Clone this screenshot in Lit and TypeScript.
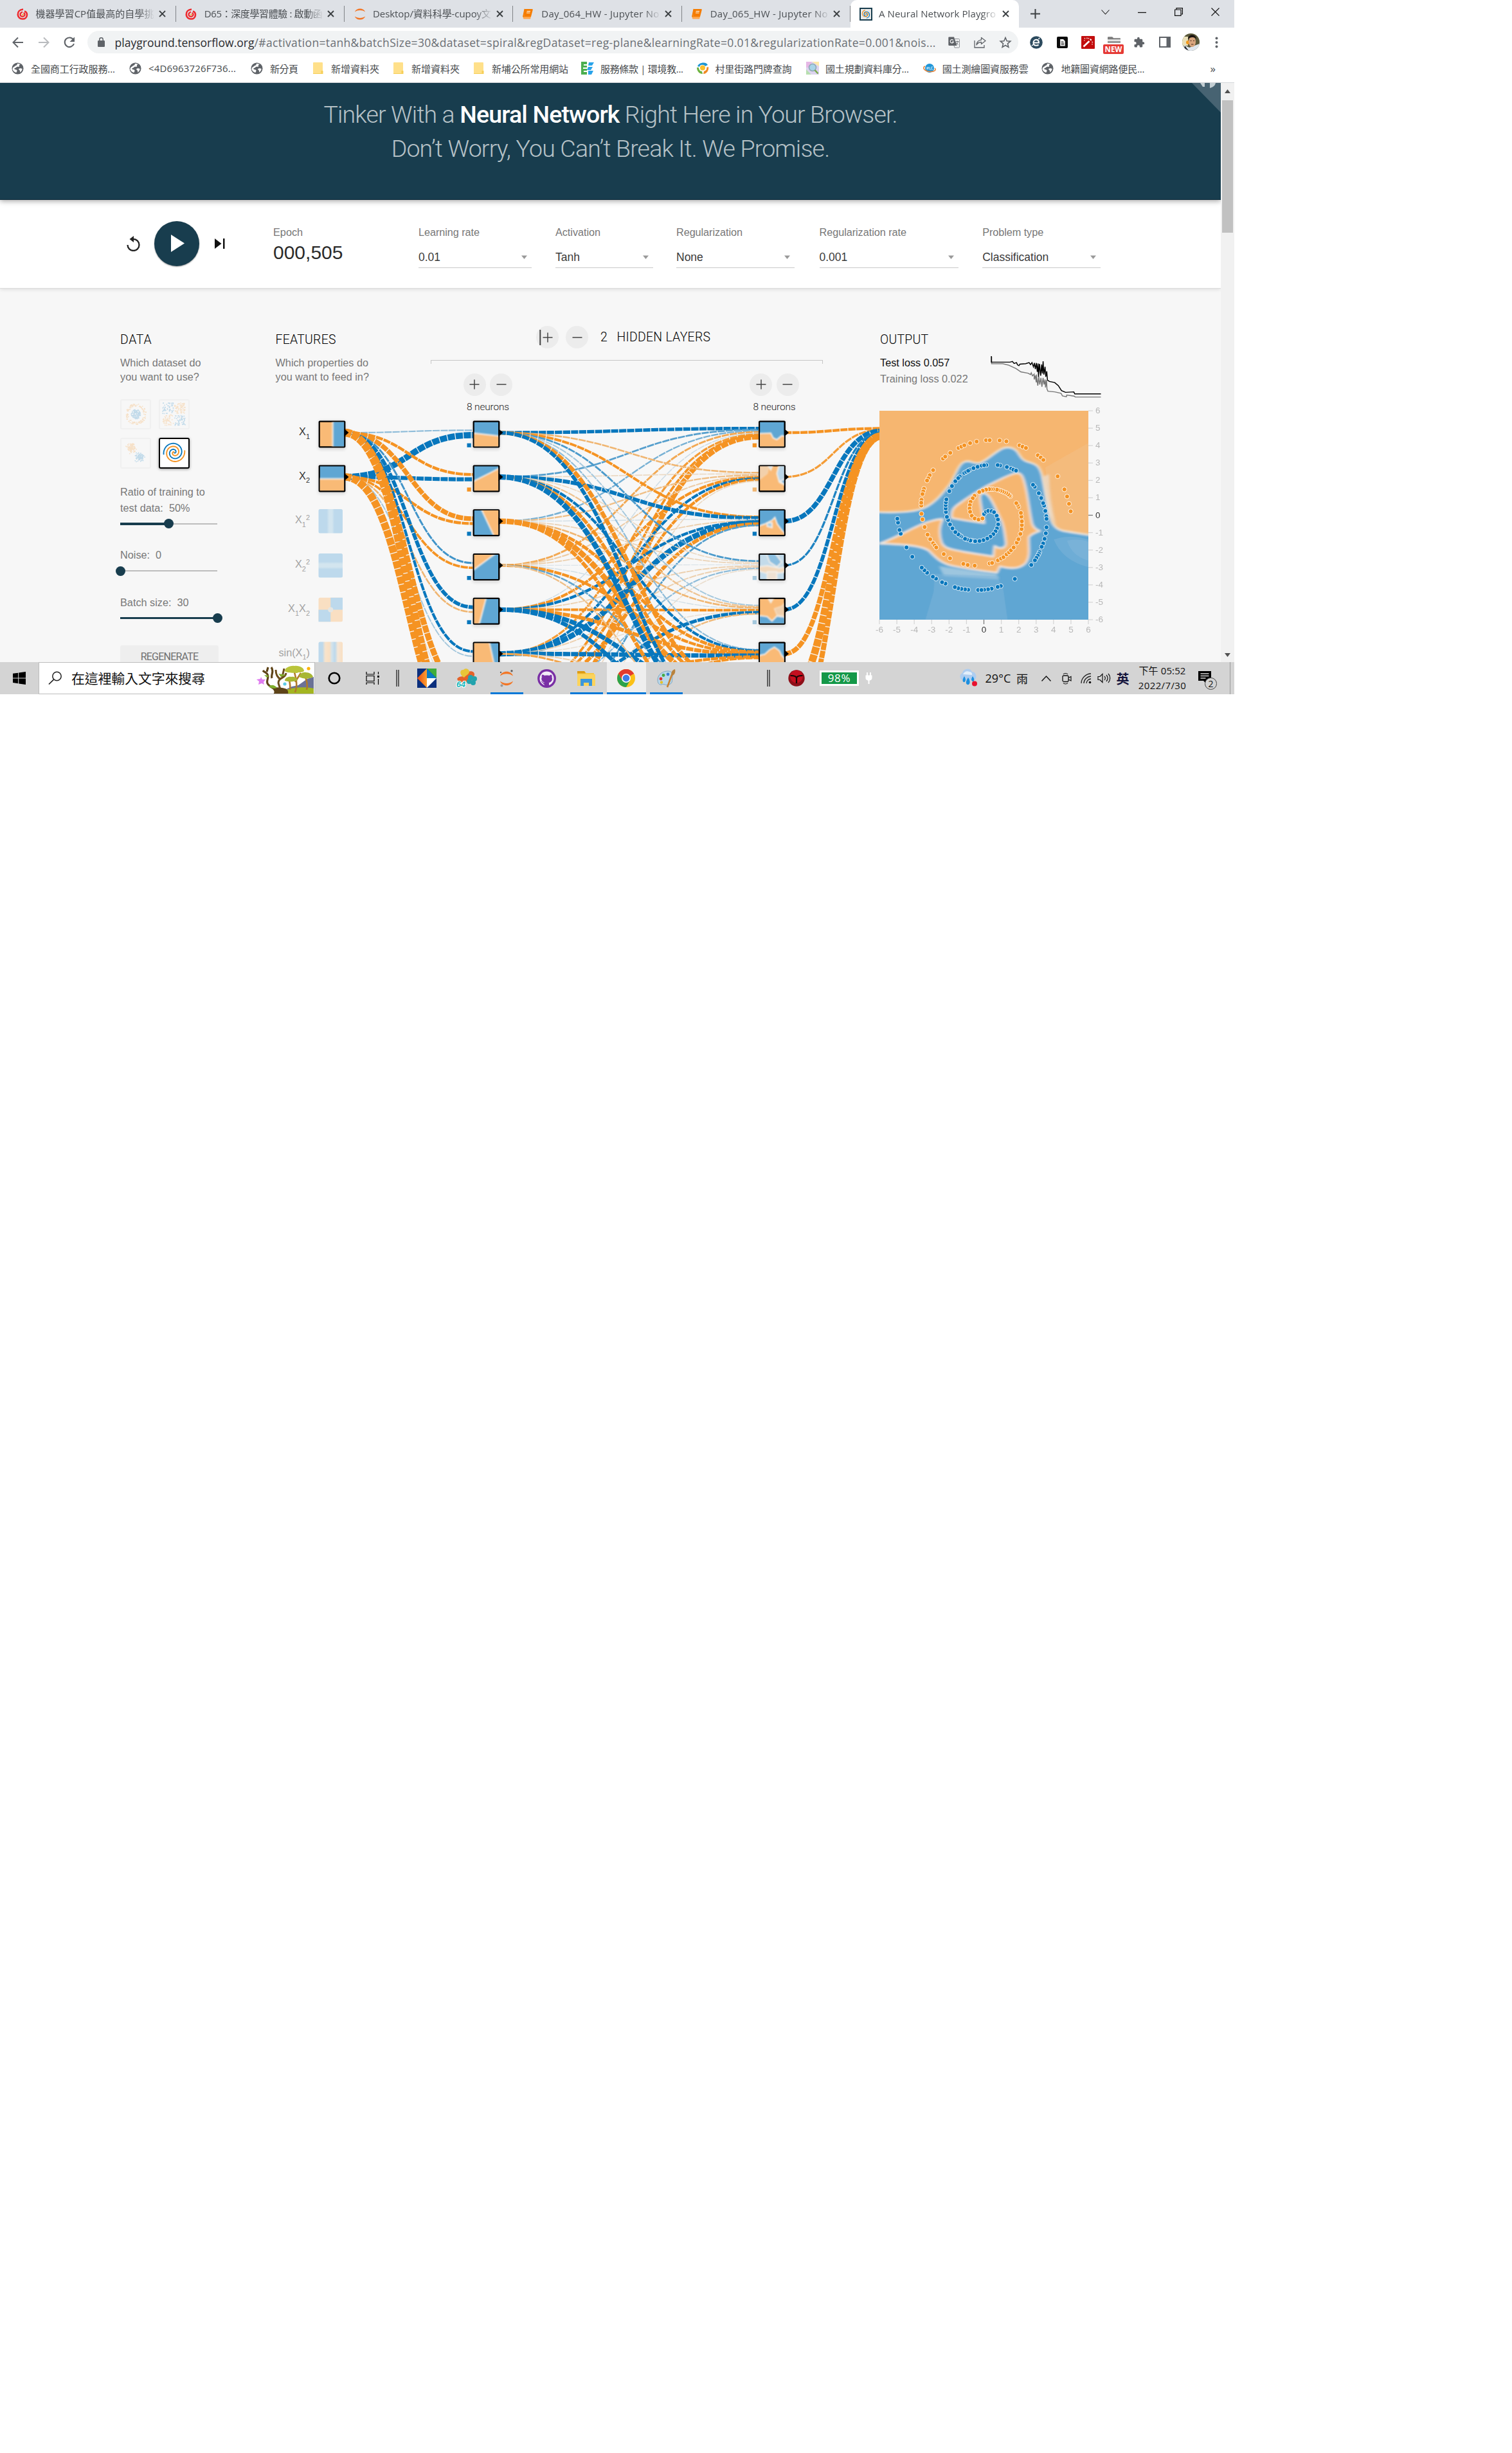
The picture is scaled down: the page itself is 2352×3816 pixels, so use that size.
import { LitElement, html, svg, css } from "lit";
import { customElement, property } from "lit/decorators.js";

const BLUE = "#0877bd";
const ORANGE = "#f59322";
const HEAT_BLUE = "#5fa6d3";
const HEAT_ORANGE = "#f6b670";
const INK = "#5f6368";

/** Inline text whose tracking is adjusted so that it spans `w` pixels. */
@customElement("fit-text")
class FitText extends LitElement {
  @property({ type: Number }) w = 0;
  static styles = css`
    :host { display: inline-block; white-space: nowrap; }
  `;
  render() {
    return html`<span class="t"><slot></slot></span>`;
  }
  firstUpdated() {
    const el = this.renderRoot.querySelector(".t") as HTMLElement;
    const n = (this.textContent || "").length;
    if (!this.w || n < 2) return;
    const ls = (this.w - el.getBoundingClientRect().width) / (n - 1);
    el.style.letterSpacing = ls.toFixed(3) + "px";
  }
}

/* ---------- icons ---------- */
const box = (w: number, h: number, vb: string, body: unknown) =>
  html`<svg class="ic" width=${w} height=${h} viewBox=${vb} preserveAspectRatio="none">${body}</svg>`;

const icons: Record<string, () => unknown> = {
  cupoy: () => box(18, 18, "0 0 18 18", svg`
    <path d="M10 1.500C4.500 2 1.500 5.500 1.800 10c.4 4 3.400 6.500 7.200 6.500 4 0 7-2.700 7-6.500 0-2.500-1.500-4.700-4-5.500" fill="none" stroke="#ee2a2e" stroke-width="2.600"/>
    <path d="M9 5.500c-2.500 1-4 3-3.200 5.300.7 2 4 2.800 5.800 1 1.600-1.700 1-4.200-1-4.800" fill="none" stroke="#ee2a2e" stroke-width="2.300"/><circle cx="9.500" cy="9.800" r="1.200" fill="#f7a823"/>`),
  jupyter: () => box(20, 20, "0 0 20 20", svg`
    <path d="M2 6.500C4-.3 16-.3 18 6.500 14 3.200 6 3.200 2 6.500zM2 13.500c2 6.800 14 6.800 16 0-4 3.300-12 3.300-16 0z" fill="#f37726"/>`),
  book: () => box(18, 18, "0 0 18 18", svg`
    <path d="M5 1h10.500c1 0 1.500.6 1.200 1.500L14 13H3z" fill="#f57c00"/><path d="M3 13h11l-1 3.500H3.500C1.500 16.500 1 14 3 13z" fill="#ffa64d"/><path d="M4.500 1L2 13.500" stroke="#f57c00" stroke-width="2"/><path d="M7.500 4.500h5.500M7 7h5.500" stroke="#fff" stroke-width="1.100"/>`),
  spiral: () => box(20, 20, "0 0 20 20", svg`
    <rect width="20" height="20" fill="#183d4e"/><rect x="2" y="2" width="16" height="16" fill="#e8eaeb"/>
    <path d="M10 10c1-1.500 3 0 2.300 1.800-1 2.500-5.300 1.600-5.300-1.600 0-4 5-5.200 7.500-2.400 2.500 3 .8 7.700-3.500 8.400" fill="none" stroke="#0877bd" stroke-width="1.200"/>
    <path d="M10 10c-1 1.200-2.600-.3-1.800-1.800 1.300-2.200 5-1 5 1.800 0 4-5.200 5.500-8 2C3 9 5 4.300 9 3.600" fill="none" stroke="#f59322" stroke-width="1.200"/>`),
  globe: () => box(19, 19, "0 0 20 20", svg`
    <circle cx="10" cy="10" r="9.500" fill="${INK}"/>
    <path d="M3 7.500c2 .3 2.500-2 4.500-2.500 1.500-.3 2-1.500 1.500-2.700 2-.4 4 0 5.500 1-2 .3-2.300 1.200-1.800 2.400.6 1.800-1.700 1.500-3.200 1.500-2 0-1.500 2-3.500 2-1 0-2 1-1 2 1.500.8 4 .2 4 2.500 0 1.500-1 1.700-1 3-3-.5-6-3-6.500-6zM12 10.500c1.500-1 3.500-1 5.500 0-.3 3-2 5-3.800 6 .3-2 .3-3-.7-3.700-.9-.7-1.500-1.300-1-2.300z" fill="#fff"/>`),
  folder: () => box(16, 18, "0 0 16 18", svg`
    <rect x="0" y="0" width="15" height="18" rx="1" fill="#ffe08a"/><path d="M12.500 13h3v5h-3z" fill="#f6cf57"/><path d="M0 17h15v1H0z" fill="#f6cf57"/>`),
  ez: () => box(20, 20, "0 0 20 20", svg`
    <path d="M0 0h9v20H0z" fill="#4caf50"/><path d="M4 5h5M3 10h6M4 15h5" stroke="#fff" stroke-width="2"/><path d="M12 1h8l-3 5h-6zM11 8h7l-3 5H9zM11 14h8l-3 6h-5z" fill="#29a3ea"/>`),
  village: () => box(20, 20, "0 0 20 20", svg`
    <path d="M2 7C4 1 15-1 18 5l-4 2C12 4 6 4 5 8z" fill="#1b95d4"/><path d="M1 9c0 6 4 10 9 10l-1-4c-3 0-5-3-5-6z" fill="#6db33f"/><path d="M19 8c1 6-3 11-8 11l1-4c3-1 5-3 4-6z" fill="#f08a24"/><circle cx="10" cy="9.500" r="4" fill="#fbc02d"/>`),
  plan: () => box(20, 20, "0 0 20 20", svg`
    <rect width="20" height="20" fill="#dcd3ee"/><path d="M0 0h9L5 9H0z" fill="#e6b8e6"/><path d="M9 0h11v7z" fill="#ffe9a8"/><path d="M0 12l8 8H0z" fill="#b8dfb0"/><circle cx="10" cy="9" r="5.500" fill="#a8d4e8" stroke="#8fa8b4" stroke-width="1.500"/><path d="M13.500 13l5 5.500" stroke="#79a94c" stroke-width="2.500"/>`),
  nlsc: () => box(20, 16, "0 0 20 16", svg`
    <circle cx="10" cy="8" r="7" fill="#2196d8"/><path d="M3 5C-2 7 2 13 10 13.500c8 .3 11-3 8-5.500" fill="none" stroke="#e9853a" stroke-width="1.600"/><path d="M6 6v4l2-4v4M10 6v4h2M15 6h-2v4h2" fill="none" stroke="#d8effb" stroke-width=".9"/>`),
  back: () => box(18, 18, "0 0 18 18", svg`<path d="M17 9H2M9 1.500L1.500 9 9 16.500" fill="none" stroke="${INK}" stroke-width="2"/>`),
  fwd: () => box(18, 18, "0 0 18 18", svg`<path d="M1 9h15M9 1.500L16.500 9 9 16.500" fill="none" stroke="#b9bbbe" stroke-width="2"/>`),
  reload: () => box(18, 18, "0 0 18 18", svg`<path d="M15 4.500A7.300 7.300 0 1 0 16 11" fill="none" stroke="${INK}" stroke-width="2.100"/><path d="M17 .5V8H9.500z" fill="${INK}"/>`),
  lock: () => box(11, 15, "0 0 11 15", svg`<rect y="5" width="11" height="10" rx="1.200" fill="${INK}"/><path d="M2.800 6V3.500a2.700 2.700 0 0 1 5.400 0V6" fill="none" stroke="${INK}" stroke-width="1.500"/>`),
  translate: () => box(18, 18, "0 0 18 18", svg`
    <path d="M1.500.5H9L13.500 14H1.500C.8 14 .3 13.500.3 12.800V1.700C.3 1 .8.500 1.500.500z" fill="${INK}"/><path d="M9.500 3.500h7c.6 0 1 .4 1 1v11.600c0 .6-.4 1-1 1H10L9 14" fill="none" stroke="#8d9094" stroke-width="1"/><path d="M8 5.800A2.600 2.600 0 1 0 8.300 8H6" fill="none" stroke="#fff" stroke-width="1.100"/><path d="M11.500 7.500h5M14 6.500v1M15.500 7.500c-.5 2.500-2 4-3 4.500M12.500 9c.5 1.500 2 3 3 3.500" fill="none" stroke="${INK}" stroke-width=".9"/>`),
  share: () => box(19, 18, "0 0 19 18", svg`<path d="M1 6v11h15v-4" fill="none" stroke="${INK}" stroke-width="1.300"/><path d="M11.500 1.500L18 6.500l-6.500 5V8.500c-3.500 0-6 1.500-7.500 4.500.3-4.500 3-7.500 7.500-8z" fill="none" stroke="${INK}" stroke-width="1.300" stroke-linejoin="round"/>`),
  star: () => box(18, 18, "0 0 18 18", svg`<path d="M9 1.500l2.200 5.200 5.600.5-4.300 3.700 1.300 5.500L9 13.500l-4.800 2.900 1.300-5.500L1.200 7.200l5.600-.5z" fill="none" stroke="${INK}" stroke-width="1.600"/>`),
  eext: () => box(20, 20, "0 0 20 20", svg`<circle cx="10" cy="10" r="9.800" fill="#2c4a5e"/><path d="M5.500 10.500h8.500c0-3-1.800-4.700-4.200-4.700S5.500 7.800 5.500 10.500s2 4.300 4.500 4.300c1.500 0 2.700-.4 3.600-1.300" fill="none" stroke="#fff" stroke-width="2"/><path d="M15 3l-1.500 2M3 15l2-1.500" stroke="#fff" stroke-width="1.500"/>`),
  doc: () => box(17, 18, "0 0 18 18", svg`<rect width="18" height="18" rx="2" fill="#0b0b0b"/><path d="M5.500 4h5l3 3v7.500h-8z" fill="#fff"/><path d="M7 8h4M7 10.200h5M7 12.300h5" stroke="#0b0b0b" stroke-width="1"/>`),
  wand: () => box(21, 20, "0 0 21 20", svg`<rect width="21" height="20" rx="1" fill="#c20d0d"/><path d="M3.500 16.500l9-8.500M14 6.500l1.500-1.500" stroke="#fff" stroke-width="2.600"/><path d="M5 3l1 1.500M9 2.500v2M4 7h1.500M16.500 9l1.500 1M12 3l-1 1.500M17 12v1.500" stroke="#fff" stroke-width="1.200"/>`),
  newf: () => html`<span class="newf">${box(21, 11, "0 0 21 11", svg`<path d="M1 1.500C1 .7 1.500.3 2.200.3h6l2 2h9.600c.7 0 1.200.4 1.200 1.200V4.500H1z" fill="#7c7c7c"/><path d="M1 6.500h20V10H1z" fill="#9a9a9a"/>`)}<b class="badge">NEW</b></span>`,
  puzzle: () => box(18, 18, "0 0 24 24", svg`<path d="M20.500 11H19V7c0-1.100-.9-2-2-2h-4V3.500a2.500 2.500 0 0 0-5 0V5H4c-1.100 0-2 .9-2 2v3.800h1.500a2.700 2.700 0 0 1 0 5.400H2V20c0 1.100.9 2 2 2h3.800v-1.500a2.700 2.700 0 0 1 5.400 0V22H17c1.100 0 2-.9 2-2v-4h1.500a2.500 2.500 0 0 0 0-5z" fill="${INK}"/>`),
  panel: () => box(18, 17, "0 0 18 17", svg`<rect x="1" y="1" width="16" height="15" fill="#fff" stroke="${INK}" stroke-width="2"/><path d="M11.500 1H17v15h-5.500z" fill="${INK}"/>`),
  avatar: () => box(27, 27, "0 0 27 27", svg`<defs><clipPath id="av"><circle cx="13.500" cy="13.500" r="13.500"/></clipPath></defs><g clip-path="url(#av)"><rect width="27" height="27" fill="#5b5a3c"/><path d="M0 5h9v14H0z" fill="#e9dfb8"/><circle cx="9" cy="14" r="3" fill="#f29a1f"/><path d="M0 27l3-9 8 4 8-3 8-3v11z" fill="#dfe6ee"/><ellipse cx="15.500" cy="13" rx="5.500" ry="8" fill="#d9a57e"/><path d="M9 9c0-9 13-9 13 0-2-4-10-4-13 0z" fill="#1c1511"/><path d="M12.500 11.500h2M17 11.500h2M14 17h3.500" stroke="#4a2c1e" stroke-width="1"/><path d="M4 19l6 8H2z" fill="#20242c"/></g>`),
  dots: () => box(5, 18, "0 0 5 18", svg`<circle cx="2.500" cy="2.500" r="2" fill="${INK}"/><circle cx="2.500" cy="9" r="2" fill="${INK}"/><circle cx="2.500" cy="15.500" r="2" fill="${INK}"/>`),
  chev: () => box(13, 8, "0 0 13 8", svg`<path d="M.5.5l6 6.500 6-6.500" fill="none" stroke="#222" stroke-width="1.100"/>`),
  min: () => box(13, 8, "0 0 13 8", svg`<path d="M0 4.500h13" stroke="#111" stroke-width="1.300"/>`),
  restore: () => box(13, 13, "0 0 13 13", svg`<path d="M.6 3h9.400v9.400H.6zM3 3V.6h9.400V10H10" fill="none" stroke="#111" stroke-width="1.200"/>`),
  close: () => box(13, 13, "0 0 13 13", svg`<path d="M.5.5l12 12M12.500.5l-12 12" stroke="#111" stroke-width="1.100"/>`),
  x: () => box(11, 11, "0 0 11 11", svg`<path d="M1 1l9 9M10 1l-9 9" stroke="#3c4043" stroke-width="1.900"/>`),
  plus: () => box(15, 15, "0 0 15 15", svg`<path d="M7.500 0v15M0 7.500h15" stroke="#3c4043" stroke-width="2"/>`),
  /* taskbar */
  win: () => box(20, 20, "0 0 20 20", svg`<path d="M0 2.800l8.200-1.100v7.700H0zM9.200 1.500L20 0v9.400H9.200zM0 10.400h8.200v7.800L0 17.100zM9.200 10.400H20V20L9.200 18.400z" fill="#000"/>`),
  search: () => box(22, 22, "0 0 22 22", svg`<circle cx="13.500" cy="8" r="6.700" fill="none" stroke="#222" stroke-width="1.500"/><path d="M8.800 12.800L1 20.500" stroke="#222" stroke-width="1.700"/>`),
  tree: () => box(96, 49, "0 0 96 49", svg`
    <path d="M46 44l15-7 10-2 14-10 10-3v26H40z" fill="#6b7196"/><path d="M50 43c12-5 34-6 45-3v9H48z" fill="#a3b521"/>
    <path d="M66 46c4-10 2-20-1-31M66 30l9-14M84 42c2-8 0-14-2-20M58 42c1-6 0-10-1-15" fill="none" stroke="#b07a2a" stroke-width="2.600"/>
    <path d="M50 13c0-5 8-9 15-8 8-1 15 3 15 8-4 3-8 1-11 3-5-1-14 1-19-3z" fill="#b9c43a"/><path d="M50 28c0-5 6-7 10-6 5-1 9 2 10 5-6 3-14 3-20 1zM72 22c1-5 6-8 11-7 5 0 10 3 11 7-6 4-16 3-22 0z" fill="#a8b733"/>
    <path d="M42 49c2-9-16-9-19-17-2-5 3-9 0-14-1-3-5-3-7-6M22 14l2-7M30 24c-2-6 4-10-1-17" fill="none" stroke="#5d4318" stroke-width="3.200"/>
    <path d="M42 49c4-13-6-15 0-23 4-4 9-3 10-10M44 26c-6-3-8-8-8-15M46 22l3-13" fill="none" stroke="#6a4d1c" stroke-width="3"/>
    <path d="M32 49c4-5 0-8-6-11 8 0 14 0 20 1 8 1 10 4 9 10z" fill="#5d4318"/>
    <path d="M25 37c4-4 10-2 13 2-5 2-9 1-13-2zM40 17l12 2-8 3zM18 19l8 1-4 3z" fill="#7fae2c"/>
    <path d="M13 22l2 4 5 0-3 4 1 4-4-2-5 2 1-5-4-3 6-1z" fill="#df7df0"/><circle cx="87" cy="9" r="2.600" fill="#ffb300"/><circle cx="50" cy="33" r="2.600" fill="#5ecbe8"/>`),
  cortana: () => box(20, 20, "0 0 20 20", svg`<circle cx="10" cy="10" r="8.300" fill="none" stroke="#000" stroke-width="2.600"/>`),
  taskview: () => box(22, 20, "0 0 22 20", svg`<path d="M1 0v4h12V0M1 6.500h12v8H1zM1 20v-3h12v3M19.500 0v4M19.500 11v9" fill="none" stroke="#000" stroke-width="1.200"/><path d="M18 6h3v3h-3z"/>`),
  sep: () => box(5, 26, "0 0 5 26", svg`<path d="M1 0v26M4 0v26" stroke="#111" stroke-width="1.200"/>`),
  diamond: () => box(30, 30, "0 0 30 30", svg`<defs><linearGradient id="dg"><stop offset="0" stop-color="#e84a10"/><stop offset="1" stop-color="#ffa030"/></linearGradient></defs><rect width="30" height="30" fill="#0b2f7d"/><path d="M15 0h15v15z" fill="#3fae3c"/><path d="M15 0L0 15l15 15z" fill="url(#dg)"/><path d="M15 0l15 15H15z" fill="#0a7ac2"/><path d="M15 15h15L15 30z" fill="#fff"/>`),
  flower: () => box(32, 30, "0 0 32 30", svg`<path d="M1 16c4-6 12-2 14-7 3-7 14-6 13 1s-4 9-10 10-14 4-17-4z" fill="#e4632a"/><path d="M12 14C4 10 5 1 11 2c2-3 9-2 9 3 0 4-5 5-8 9z" fill="#e8c637"/><g fill="#22a3ad"><circle cx="22" cy="14" r="4"/><circle cx="28" cy="16" r="4"/><circle cx="26" cy="22" r="4"/><circle cx="20" cy="20" r="4"/></g><text x="0" y="28.500" font-family="Liberation Sans, sans-serif" font-weight="700" font-style="italic" font-size="12.500" fill="#12b5b9" stroke="#fff" stroke-width="2" paint-order="stroke">64</text>`),
  jup2: () => box(22, 27, "0 0 22 27", svg`<path d="M1 9.500c2.500-9 17.500-9 20 0-5-4.500-15-4.500-20 0zM1 17.500c2.500 9 17.500 9 20 0-5 4.500-15 4.500-20 0z" fill="#f37726"/><circle cx="19" cy="1.800" r="1.700" fill="#616262"/><circle cx="2" cy="4" r="1.200" fill="#616262"/><circle cx="3.500" cy="24.500" r="2" fill="#989798"/>`),
  github: () => box(29, 29, "0 0 29 29", svg`<circle cx="14.500" cy="14.500" r="14.400" fill="#7a2fa5"/><circle cx="14.500" cy="14.500" r="11" fill="#f3ecf8"/><path d="M12 25.500v-4c-4 1-4-2-6-2.500M17.500 25.500v-5c5-.5 5.500-4.500 4.500-8 .3-1 .2-2.500-.3-3.500-1.500 0-2.500 1-3.200 1.400-2-.5-5.500-.5-7.500 0C10 9.500 8.500 9 7.500 9c-.5 1-.5 2.500-.2 3.500-1.300 3.500 0 7.500 4.700 8l-.5 5h6z" fill="#7a2fa5" stroke="#7a2fa5"/>`),
  files: () => box(28, 23, "0 0 28 23", svg`<path d="M0 0h11l3 3h12v20H0z" fill="#f8c846"/><path d="M0 0h11l2 3.500H0z" fill="#dd9a12"/><path d="M0 5h28v18H0z" fill="#fbd35c"/><path d="M5 12h18v11h-5v-5h-8v5H5z" fill="#3a96dd"/>`),
  chrome: () => box(28, 28, "0 0 28 28", svg`<circle cx="14" cy="14" r="14" fill="#fbc116"/><path d="M14 14L1.900 7A14 14 0 0 1 26.100 7z" fill="#e33b2e"/><path d="M14 7h12.100A14 14 0 0 0 1.900 7L8 17.500z" fill="#e33b2e"/><path d="M1.900 7A14 14 0 0 0 14 28l6-10.500L14 20 8 17.500z" fill="#2ba24c"/><circle cx="14" cy="14" r="7" fill="#fff"/><circle cx="14" cy="14" r="5.400" fill="#3f7de8"/>`),
  paint: () => box(29, 29, "0 0 29 29", svg`<path d="M1 17C1 8 9 3 17 3c6 0 8 4 7 9-1 6 1 9-5 12-6 2-8-2-12 0C3 25 1 21 1 17z" fill="#b9d7ea" stroke="#7fa6c0" stroke-width="1"/><circle cx="6" cy="15" r="2.400" fill="#d33"/><circle cx="10" cy="9.500" r="2.400" fill="#4a4"/><circle cx="17" cy="8" r="2.400" fill="#3a7fd0"/><circle cx="7" cy="20.500" r="2.200" fill="#e6c12a"/><path d="M16 28l7-19" stroke="#c9802e" stroke-width="2.600"/><path d="M22 9c0-5 2-8 6-9 1 4 0 8-4 10z" fill="#b9823c"/>`),
  trend: () => box(26, 26, "0 0 26 26", svg`<circle cx="13" cy="13" r="12.700" fill="#8d0f19"/><circle cx="13" cy="10.500" r="10" fill="#c4101f"/><path d="M3.500 9c4 0 9.500 1 9.500 4 0-3 5.500-4 9.500-4M13 12v9" fill="none" stroke="#1b0505" stroke-width="2.200"/>`),
  plug: () => box(11, 18, "0 0 11 18", svg`<path d="M3 0v5M8 0v5" stroke="#fff" stroke-width="1.800"/><path d="M.5 4.500h10V9c0 2-2 3.500-4 3.800V18h-2v-5.200C2.500 12.500.5 11 .5 9z" fill="#fff"/>`),
  rain: () => box(29, 26, "0 0 29 26", svg`<path d="M6 16a6 6 0 0 1 0-11 8 8 0 0 1 15-2 7 7 0 0 1 3 13z" fill="#aecdf0"/><path d="M7 7c2-4 6-6 10-4 3 0 5 3 4 5z" fill="#e3effb"/><path d="M9 10c-3 5-3 8-1 9s5-3 1-9zM15 12c-4 6-4 10-1 11s6-4 1-11zM22 10c-3 5-2 7 0 8s4-3 0-8z" fill="#1b8fe0"/><circle cx="25" cy="21.500" r="4" fill="#e8112d"/>`),
  up: () => box(15, 9, "0 0 15 9", svg`<path d="M.5 8.500l7-7.500 7 7.500" fill="none" stroke="#111" stroke-width="1.400"/>`),
  cam: () => box(15, 19, "0 0 15 19", svg`<rect x="1" y="5" width="9" height="9.500" rx="2" fill="none" stroke="#111" stroke-width="1.300"/><path d="M10 8.500l4-2v6.500l-4-2M2 3c1.500-2 5.500-2 7 0M2 16.500c1.500 2 5.500 2 7 0" fill="none" stroke="#111" stroke-width="1.200"/>`),
  wifi: () => box(17, 17, "0 0 17 17", svg`<path d="M1 16C1 8 8 1 16 1M5 16C5 10 10 5.500 16 5M9 16c0-3.500 3-6.500 7-7" fill="none" stroke="#222" stroke-width="1.300"/><circle cx="14.500" cy="14.500" r="1.800" fill="#111"/>`),
  vol: () => box(21, 16, "0 0 21 16", svg`<path d="M1 5.500h3l4-4v13l-4-4H1z" fill="none" stroke="#111" stroke-width="1.200"/><path d="M11 5c1.500 1.700 1.500 4.300 0 6M14 3c2.500 3 2.500 7 0 10M17 1c3.600 4 3.600 10 0 14" fill="none" stroke="#111" stroke-width="1.200"/>`),
  note: () => html`<span class="note">${box(20, 20, "0 0 20 20", svg`<path d="M0 0h20v15h-7v5l-5-5H0z"/><path d="M3.500 4h13M3.500 7.500h13M3.500 11h8" stroke="#d4d4d4" stroke-width="1.300"/>`)}<i class="count">2</i></span>`,
};

/* ---------- browser chrome data ---------- */
const TABS = [
  { icon: "cupoy", title: "機器學習CP值最高的自學挑", w: 184 },
  { icon: "cupoy", title: "D65：深度學習體驗 : 啟動函", w: 184 },
  { icon: "jupyter", title: "Desktop/資料科學-cupoy文", w: 184 },
  { icon: "book", title: "Day_064_HW - Jupyter No", w: 183 },
  { icon: "book", title: "Day_065_HW - Jupyter No", w: 183 },
  { icon: "spiral", title: "A Neural Network Playgro", w: 182, active: true },
];

const BOOKMARKS: [string, string, number, number][] = [
  ["globe", "全國商工行政服務...", 131, 183],
  ["globe", "<4D6963726F736...", 136, 189],
  ["globe", "新分頁", 44, 95],
  ["folder", "新增資料夾", 75, 125],
  ["folder", "新增資料夾", 75, 125],
  ["folder", "新埔公所常用網站", 119, 169],
  ["ez", "服務條款 | 環境教...", 129, 178.5],
  ["village", "村里街路門牌查詢", 119, 171.5],
  ["plan", "國土規劃資料庫分...", 130, 181.7],
  ["nlsc", "國土測繪圖資服務雲", 134, 184.8],
  ["globe", "地籍圖資網路便民...", 130, 262],
];

const CONTROLS: [string, string, number, number, number][] = [
  ["Learning rate", "0.01", 176, 213, 95],
  ["Activation", "Tanh", 151.5, 188, 70],
  ["Regularization", "None", 184, 222.5, 103],
  ["Regularization rate", "0.001", 216, 253.7, 135.5],
  ["Problem type", "Classification", 184, 184, 95],
];

/* ---------- network ---------- */
const ROWS = [0, 1, 2, 3, 4, 5, 6, 7].map((i) => 673.6 + i * 68.8);
const W1 = [
  [0.4, 3.7], [-1.4, 2.2], [-2.7, -1.4], [0.75, -1.1], [2, -0.6], [1.3, 0.3], [-3.4, -0.12], [-5, -4.6],
];
const W2 = [
  [1.8, 0.65, 0.5, -0.75, 0.12, -0.9, -1.1, -3],
  [-0.6, -0.2, -0.5, -0.35, -1.3, 1.3, -1.4, -0.2],
  [-1.2, 2.1, 0.1, -0.3, 1.4, 3.2, -2, 0.65],
  [0.7, -0.2, -0.25, 0.05, -0.3, -0.3, 0.4, -0.15],
  [0.3, -0.45, -0.6, 0.1, -1.2, -0.12, 1.8, -0.55],
  [0.4, 1.3, -1.6, -1.4, -2, 2.4, -1.5, -1],
  [-2.3, -1.8, -3.2, 0.6, 2.6, -0.3, 1.4, -1.2],
  [2, 3.1, -2, -0.5, 2.2, -0.8, -1, 1.2],
];
const W3 = [-1.4, -0.9, 2.7, 0.9, 2, -2.7, -4.6, -3];

function mix(a: number[], b: number[], t: number) {
  return `rgb(${a.map((v, i) => Math.round(v + (b[i] - v) * t)).join(",")})`;
}
function weightColor(w: number) {
  const t = Math.min(1, Math.abs(w));
  return mix([232, 234, 235], w < 0 ? [245, 147, 34] : [8, 119, 189], t);
}
function link(x1: number, y1: number, x2: number, y2: number, w: number) {
  const mx = (x1 + x2) / 2;
  const width = 1.25 * (1 + (9 * Math.min(5, Math.abs(w))) / 5);
  return svg`<path d="M${x1} ${y1}C${mx} ${y1} ${mx} ${y2} ${x2} ${y2}" fill="none" stroke=${weightColor(w)} stroke-width=${width} stroke-dasharray="11.250 1.250"/>`;
}
const spread = (i: number, n: number) => ((i - (n - 1) / 2) / n) * 15;

/** Coloured areas of a 10x10 neuron thumbnail: a base fill, then [fill, polygon points, opacity]. */
type Heat = { base: string; areas: [string, string, number?][] };
const B = HEAT_BLUE;
const O = "#f9ba76";
const L1: Heat[] = [
  { base: B, areas: [[O, "-2,4.300 12,5.900 12,12 -2,12"]] },
  { base: B, areas: [[O, "-2,7 12,0 12,12 -2,12"]] },
  { base: B, areas: [[O, "2.700,-1 12,-1 12,12 8.900,12"]] },
  { base: B, areas: [[O, "-2,-2 11,-2 -2,7.500"]] },
  { base: B, areas: [[O, "-2,-2 5.400,-2 1.700,12 -2,12"]] },
  { base: B, areas: [[O, "-2,-2 6,-2 9,12 -2,12"]] },
];
const L2: Heat[] = [
  { base: B, areas: [[O, "-1,4.700 4.500,4.500 5.500,6.500 7,7.200 9,5.600 11,5.800 11,11 -1,11"]] },
  { base: O, areas: [["#e8eaeb", "-1,-1 4,-1 3,3 -1,6", 0.45], ["#c5d9e6", "3,-1 5.500,-1 4.500,1.500"], ["#bcd6e8", "8,-1 11,-1 11,8 8,6.500 7,3"], [B, "8.500,6 11,5 11,8.500"]] },
  { base: B, areas: [[O, "-1,6.500 2,5.500 5,4 6.200,2.800 7.200,5.500 9,8 11,10 11,11 -1,11"], ["#a9cde5", "3,5 5,5 5,7 3,6.500"]] },
  { base: "#c3dbea", areas: [["#8cbfe0", "2.500,-1 6,-1 9,3 7,5 4,3"], ["#f2d9bd", "-1,5 3,4.500 8,5.500 11,5 11,7 4,8 -1,6.500"], ["#efe1d2", "3,7 7,7 7,11 3,11"]] },
  { base: O, areas: [["#e8dccf", "6,4 9,3 11,1 11,7 7,6.500", 0.6], ["#f1e3d2", "3,-1 6,-1 4.500,1.500"], [B, "-1,6.700 3,7.200 5,9 7,7 11,7.500 11,11 -1,11"]] },
  { base: B, areas: [[O, "-1,5.200 2,4.500 4,2.700 6,1.600 8,3 9,5 11,7 11,11 -1,11"]] },
];

function neuron(x: number, cy: number, h: Heat) {
  const y = cy - 18.6;
  return svg`
    <rect x=${x - 0.5} y=${y} width="42.500" height="45" rx="3" fill="#000" opacity=".13" filter="url(#soft)"/>
    <rect x=${x + 0.1} y=${y + 0.1} width="41.800" height="42" rx="2" fill="#000"/>
    <svg x=${x + 2.1} y=${y + 2} width="37.600" height="38" viewBox="0 0 10 10" preserveAspectRatio="none">
      <rect width="10" height="10" fill=${h.base}/>
      <g filter="url(#haze)">${h.areas.map(([f, p, o]) => svg`<polygon points=${p} fill=${f} opacity=${o ?? 1} stroke="#f3efe9" stroke-width=".5"/>`)}</g>
    </svg>
    <path d="M${x + 40} ${cy - 6}l7 6-7 6z" fill="#000"/>`;
}
function biasDot(x: number, cy: number, w: number) {
  return svg`<rect x=${x} y=${cy + 16.5} width="6.250" height="6.250" fill=${weightColor(w)}/>`;
}

/* ---------- output plot ---------- */
const ORANGE_PTS = "337,620 346,611 367,594 401,572 413,566 425,560 449,550 476,543 515,537 530,537 571,538 599,542 653,560 666,566 680,572 729,605 741,615 752,626 811,700 839,759 850,791 858,824 865,858 296,672 282,695 276,709 271,719 258,756 255,768 252,780 248,806 247,832 247,819 248,869 252,894 261,929 273,963 284,984 296,1002 303,1012 309,1021 340,1051 366,1070 421,1095 439,1100 468,1103 530,1093 540,1091 564,1079 577,1071 587,1065 600,1052 610,1043 618,1034 629,1021 642,999 649,984 657,960 662,938 663,911 663,920 663,903 661,882 659,865 649,838 645,829 640,821 615,790 612,786 606,781 598,775 590,772 583,768 575,765 567,762 560,760 544,758 536,758 520,759 528,758 515,760 501,765 487,771 467,788 460,799 451,815 448,830 447,845 449,860 456,878 468,890 484,895 500,890";
const BLUE_PTS = "507,870 515,860 524,856 538,857 548,862 559,878 564,895 565,917 560,935 554,948 545,961 533,972 520,981 504,988 488,992 462,992 455,990 450,990 470,993 436,985 428,982 412,971 406,967 400,962 388,952 376,935 366,917 358,897 353,883 349,861 348,845 348,830 349,817 351,804 363,767 374,744 388,722 406,701 400,708 425,685 433,680 447,671 441,675 463,663 480,657 497,652 516,649 507,650 573,651 563,649 601,658 619,665 628,670 639,674 716,747 709,738 733,776 743,798 755,832 751,821 760,856 764,880 765,892 765,930 762,957 757,982 751,1003 745,1018 736,1042 733,1050 729,1058 723,1068 717,1079 702,1100 634,1163 576,1195 563,1199 538,1207 523,1210 507,1212 482,1213 496,1213 441,1212 428,1210 413,1208 400,1205 386,1200 347,1184 333,1178 308,1162 295,1153 271,1135 260,1124 249,1112 210,1063 186,1021 162,959 157,942 151,909 148,891";
const parse = (s: string) => s.split(" ").map((p) => p.split(",").map(Number));
const dot = (fill: string) => ([a, b]: number[]) =>
  svg`<circle cx=${((a - 74) / 864) * 325} cy=${((b - 404) / 943) * 325} r="3.600" fill=${fill} stroke="#fff" stroke-opacity=".85" stroke-width="1"/>`;

/* ---------- dataset thumbnails ---------- */
function rng(seed: number) {
  let a = seed;
  return () => {
    a = (a + 0x6d2b79f5) | 0;
    let t = Math.imul(a ^ (a >>> 15), 1 | a);
    t = (t + Math.imul(t ^ (t >>> 7), 61 | t)) ^ t;
    return ((t ^ (t >>> 14)) >>> 0) / 4294967296;
  };
}
function px(x: number, y: number, c: string) {
  return svg`<rect x=${x.toFixed(1)} y=${y.toFixed(1)} width="1.700" height="1.700" fill=${c}/>`;
}
function thumb(kind: string) {
  const r = rng(kind.length * 977 + 5);
  const out: unknown[] = [];
  if (kind === "circle") {
    for (let i = 0; i < 230; i++) {
      const a = r() * 6.283;
      const d = i % 2 ? Math.sqrt(r()) * 8 : 13 + r() * 4.5;
      out.push(px(23.5 + d * Math.cos(a), 22.5 + d * Math.sin(a), i % 2 ? BLUE : ORANGE));
    }
  } else if (kind === "xor") {
    for (let i = 0; i < 230; i++) {
      const x = (r() - 0.5) * 36;
      const y = (r() - 0.5) * 36;
      out.push(px(22.5 + x + Math.sign(x), 22.5 + y + Math.sign(y), x * y > 0 ? BLUE : ORANGE));
    }
  } else if (kind === "gauss") {
    for (let i = 0; i < 200; i++) {
      const g = () => (r() + r() + r() - 1.5) * 7;
      out.push(i % 2 ? px(30 + g(), 29 + g(), BLUE) : px(16 + g(), 15 + g(), ORANGE));
    }
  } else {
    for (const [c, o] of [[BLUE, 0], [ORANGE, Math.PI]] as [string, number][]) {
      let d = "";
      for (let i = 0; i <= 80; i++) {
        const t = (i / 80) * 11.2;
        const rad = (i / 80) * 18;
        d += `${i ? "L" : "M"}${(23.7 + rad * Math.sin(t + o)).toFixed(2)} ${(22.8 + rad * Math.cos(t + o)).toFixed(2)}`;
      }
      out.push(svg`<path d=${d} fill="none" stroke=${c} stroke-width="2"/>`);
    }
  }
  return html`<div class="thumb ${kind === "spiral" ? "on" : ""}"><svg width="47" height="47" viewBox="0 0 47 47">${out}</svg></div>`;
}

const round = (glyph: string) => html`<span class="round"><svg width="18" height="24" viewBox="0 0 18 24" overflow="visible">
  ${glyph === "minus" ? svg`<path d="M1.500 12h15" stroke="#444" stroke-width="1.500"/>` : svg`<path d="M1.500 12h15M9 4.500v15" stroke="#444" stroke-width="1.500"/>`}
  ${glyph === "bar" ? svg`<path d="M-2.700 0v24" stroke="#444" stroke-width="2"/>` : ""}</svg></span>`;

@customElement("app-root")
class AppRoot extends LitElement {
  static styles = css`
    :host { display: block; width: 2352px; height: 3816px; background: #fff; font-family: "Liberation Sans", Arial, sans-serif; }
    * { box-sizing: border-box; }
    .ic { display: block; flex: none; overflow: visible; }
    .screen { width: 1920px; height: 1080px; overflow: hidden; display: flex; flex-direction: column; }
    .seg { font-family: "Open Sans", "Noto Sans CJK TC", sans-serif; }

    .tabs { height: 43px; background: #dee1e6; display: flex; padding-left: 11.500px; flex: none; }
    .tab { width: 262.300px; display: flex; align-items: center; padding-left: 14px; position: relative; }
    .tab.active { background: #fff; border-radius: 10px 10px 0 0; }
    .fav { width: 30px; display: flex; }
    .title { width: 186px; overflow: hidden; font-size: 15px; line-height: 43px; height: 43px; color: #4b4f53; -webkit-mask-image: linear-gradient(90deg, #000 160px, transparent 186px); mask-image: linear-gradient(90deg, #000 160px, transparent 186px); }
    .tabx { margin-left: 6px; }
    .tab:not(.active)::after { content: ""; width: 1.200px; height: 25px; background: #808387; margin-left: 14.500px; }
    .newtab { width: 51px; display: flex; justify-content: center; align-items: center; }
    .wins { margin-left: auto; display: flex; padding: 0 1px 6px 0; }
    .wins span { width: 57px; display: flex; justify-content: center; align-items: center; }

    .bar { height: 45px; flex: none; display: flex; align-items: center; background: #fff; }
    .nav { width: 136px; display: flex; padding-left: 19px; gap: 22px; }
    .omni { width: 1448px; height: 35px; border-radius: 18px; background: #f1f3f4; display: flex; align-items: center; padding-left: 16px; font-size: 17.500px; color: #6b6f74; }
    .omni .lock { width: 26.500px; }
    .host { color: #2a2b2f; }
    .omni .end { margin-left: auto; display: flex; }
    .cell { width: 40px; display: flex; justify-content: center; align-items: center; }
    .exts { display: flex; padding-left: 8px; height: 35px; align-items: center; }
    .newf { display: flex; flex-direction: column; align-items: center; padding-top: 9px; }
    .badge { background: #e53935; color: #fff; font: 700 11.500px/15px "Open Sans", sans-serif; border-radius: 2px; width: 32px; text-align: center; height: 15px; margin-top: 1px; }

    .marks { height: 41px; flex: none; display: flex; align-items: center; padding: 0 0 4px 18px; border-bottom: 1px solid #d5d7da; font-size: 15px; color: #45494c; }
    .mark { display: flex; align-items: center; flex: none; }
    .mico { width: 30px; display: flex; }
    .mark.folder .mico { padding-left: 2px; }
    .more { font-size: 17px; color: #45494d; }

    .view { display: flex; height: 901px; flex: none; }
    .page { width: 1899px; height: 901px; overflow: hidden; display: flex; flex-direction: column; background: #f7f7f7; }
    .hero { position: relative; height: 182px; flex: none; background: #183d4e; color: rgba(255, 255, 255, .7); padding-top: 22.500px; display: flex; flex-direction: column; align-items: center; font: 300 37.500px/53.750px Roboto, sans-serif; box-shadow: 0 2px 8px rgba(0, 0, 0, .35); border-bottom: 1px solid #0e2a38; z-index: 2; }
    .hero strong { font-weight: 500; color: #fff; }
    .corner { position: absolute; right: 0; top: 0; }

    .ctl { height: 137.500px; flex: none; background: #fff; display: flex; border-bottom: 1px solid #dcdcdc; box-shadow: 0 1px 6px rgba(0, 0, 0, .12); z-index: 1; padding-left: 197px; }
    .player { width: 228px; display: flex; align-items: center; height: 135px; }
    .play { width: 70px; height: 70px; border-radius: 50%; background: #183d4e; display: flex; align-items: center; justify-content: center; margin: 0 24px 0 22px; box-shadow: 0 1px 2px rgba(0, 0, 0, .4); }
    .field { padding-top: 39px; }
    .lab { font-size: 16.250px; line-height: 22px; color: #777; font-weight: 300; }
    .epoch { width: 226px; }
    .epochn { font-size: 30px; line-height: 40px; color: #2b2b2b; margin-top: 1px; }
    .sel { height: 32px; margin-top: 12.500px; border-bottom: 1.500px solid #c8c8c8; font-size: 17.500px; line-height: 20px; color: #3a3a3a; display: flex; justify-content: space-between; padding: 5px 7px 0 0; }

    .main { display: flex; padding-left: 187px; height: 581px; overflow: hidden; }
    h3 { margin: 0; font: 300 19.400px/26px Roboto, sans-serif; color: #000; }
    .sub { font-size: 16.250px; line-height: 22px; color: #777; margin-top: 11px; white-space: nowrap; }
    .data { width: 241.500px; padding-top: 67px; }
    .thumbs { display: grid; grid-template-columns: 47.500px 47.500px; gap: 13px 12.500px; margin-top: 24px; }
    .thumb { width: 47.500px; height: 47.500px; border: 2px solid #f0f0f0; border-radius: 3px; display: flex; align-items: center; justify-content: center; }
    .thumb:not(.on) svg { opacity: .22; }
    .thumb.on { border-color: #000; background: #fff; box-shadow: 0 1px 4px rgba(0, 0, 0, .4); }
    .slab { font-size: 16.250px; line-height: 24.700px; color: #777; white-space: pre; }
    .slider { width: 151px; height: 15px; display: flex; align-items: center; }
    .fill { height: 3.200px; background: #183d4e; }
    .knob { width: 15px; height: 15px; border-radius: 50%; background: #183d4e; margin: 0 -7.500px; z-index: 1; flex: none; }
    .rest { flex: 1; height: 2.500px; background: #bdbdbd; }
    .regen { width: 153px; height: 27px; padding-top: 7.500px; background: #eee; border-radius: 3px 3px 0 0; margin-top: 35.500px; font: 400 16px/19px Roboto, sans-serif; color: #707070; text-align: center; }

    .net { width: 939.500px; display: flex; flex-direction: column; }
    .nethead { display: flex; height: 198px; }
    .feat { width: 241.500px; padding-top: 67px; }
    .layers { width: 610px; padding-top: 58.500px; }
    .lrow { display: flex; align-items: center; padding-left: 164px; height: 35px; }
    .lrow .round + .round { margin-left: 11px; }
    .lrow h3 { margin-left: 19px; width: 25.500px; }
    .lrow h3 + h3 { margin-left: 0; width: auto; }
    .brace { height: 6px; margin-top: 17.500px; border: 1.500px solid #c6c6c6; border-bottom: 0; }
    .round { width: 35px; height: 35px; border-radius: 50%; background: #ececec; display: flex; align-items: center; justify-content: center; flex: none; }
    .groups { display: flex; justify-content: space-between; padding: 15px 37.500px 0 51px; }
    .group { display: flex; flex-direction: column; align-items: center; width: 76px; font-size: 16px; color: #222; }
    .pair { display: flex; gap: 6.500px; }
    .group .n { line-height: 22px; margin-top: 6px; font-family: Roboto, sans-serif; font-weight: 300; font-size: 15.500px; }
    .canvas { display: block; overflow: visible; }

    .out { width: 360px; padding-top: 67px; z-index: 1; }
    .out h3, .losses { padding-left: 1px; }
    .losses { display: flex; height: 75px; margin-top: 10.500px; }
    .ltext { width: 172px; font-size: 16.250px; line-height: 25.300px; color: #777; white-space: nowrap; }
    .ltext .test { color: #111; }
    .loss { margin-top: 2px; }
    .plotrow { display: flex; margin-top: 11.500px; }

    .scroll { width: 21px; background: #f1f1f1; display: flex; flex-direction: column; align-items: center; padding: 9.500px 0 8px; }
    .thumbbar { width: 17px; height: 206px; background: #c1c1c1; margin-top: 11px; margin-bottom: auto; }

    .task { height: 50px; flex: none; background: #d4d4d4; display: grid; align-items: stretch; grid-template-columns: 60px 430px 60px 60px 16px 7px repeat(7, 62px) 120px 16px 72px 61px 30px 114px 50px 45px 30px 44px 20px 40px 16px 43px 80px 66px; color: #111; }
    .t { display: flex; align-items: center; justify-content: center; position: relative; white-space: nowrap; }
    .t.run::after, .t.on::after { content: ""; position: absolute; left: 6px; right: 5px; bottom: 0; height: 3px; background: #0078d7; }
    .t.on { background: linear-gradient(90deg, #d4d4d4 1px, #eee 1px); }
    .t.on::after { left: 1px; right: 0; }
    .find { background: #fff; border: 1px solid #bcbcbc; display: flex; align-items: center; font-size: 21px; padding-left: 14px; overflow: hidden; }
    .find .q { margin-left: 14px; margin-right: auto; line-height: 46px; }
    .batt { width: 62px; height: 24px; background: #149848; border: 3px solid #fff; color: #fff; font-size: 17px; line-height: 17px; text-align: center; }
    .clock { flex-direction: column; font-size: 15px; line-height: 22.500px; padding-bottom: 1px; }
    .temp { font-size: 18px; }
    .ime { font-weight: 700; font-size: 20px; color: #14143c; }
    .note { display: flex; margin: 0 0 2px -4px; }
    .count { width: 19px; height: 19px; border: 1px solid #444; border-radius: 50%; background: #d4d4d4; font: 400 14px/17px "Open Sans", sans-serif; text-align: center; margin: 10px 0 -8px -10px; }
    .last { border-right: 1px solid #999; }
  `;

  private ic(name: string) {
    return icons[name]();
  }

  private slider(v: number) {
    return html`<div class="slider"><span class="fill" style="width:${v * 151}px"></span><span class="knob"></span><span class="rest"></span></div>`;
  }

  private renderNetwork() {
    const f = 495, a = 735, b = 1179.5, o = 1368;
    const links: unknown[] = [];
    W1.forEach((ws, j) => ws.forEach((w, i) => links.push(link(f + 40, ROWS[i], a, ROWS[j] + spread(i, 2), w))));
    W2.forEach((ws, j) => ws.forEach((w, i) => links.push(link(a + 40, ROWS[i], b, ROWS[j] + spread(i, 8), w))));
    W3.forEach((w, i) => links.push(link(b + 40, ROWS[i], o + 4, ROWS[0] + spread(i, 8), w)));
    const fy = (i: number) => ROWS[i] - 18.6;
    const label = (y: number, t: unknown, dim = false) =>
      svg`<text x="481.500" y=${y} text-anchor="end" font-size="16.250" fill=${dim ? "#a3a3a3" : "#333"}>${t}</text>`;
    const sb = (t: string) => svg`<tspan dy="5.500" font-size="11">${t}</tspan>`;
    return svg`
      <defs>
        <filter id="haze" x="-20%" y="-20%" width="140%" height="140%"><feGaussianBlur stdDeviation=".3"/></filter>
        <filter id="soft" x="-20%" y="-20%" width="140%" height="150%"><feGaussianBlur stdDeviation="2.500"/></filter>
        <linearGradient id="v2"><stop offset=".34" stop-color="#bdd9ec"/><stop offset=".44" stop-color="#d3e5ef"/><stop offset=".56" stop-color="#d3e5ef"/><stop offset=".66" stop-color="#bdd9ec"/></linearGradient>
        <linearGradient id="h2" x2="0" y2="1"><stop offset=".34" stop-color="#bdd9ec"/><stop offset=".44" stop-color="#d3e5ef"/><stop offset=".56" stop-color="#d3e5ef"/><stop offset=".66" stop-color="#bdd9ec"/></linearGradient>
        <linearGradient id="sn"><stop offset=".16" stop-color="#bdd9ec"/><stop offset=".28" stop-color="#f7e3cc"/><stop offset=".45" stop-color="#f9dfc2"/><stop offset=".55" stop-color="#d3e3ec"/><stop offset=".68" stop-color="#bdd9ec"/><stop offset=".8" stop-color="#f5e6d6"/><stop offset="1" stop-color="#f9dfc2"/></linearGradient>
      </defs>
      ${links}
      ${neuron(f, ROWS[0], { base: O, areas: [[B, "5.300,-2 12,-2 12,12 5.300,12"]] })}
      ${neuron(f, ROWS[1], { base: B, areas: [[O, "-2,5.100 12,5.100 12,12 -2,12"]] })}
      <rect x=${f} y=${fy(2)} width="37.500" height="37.500" rx="2.500" fill="url(#v2)"/>
      <rect x=${f} y=${fy(3)} width="37.500" height="37.500" rx="2.500" fill="url(#h2)"/>
      <rect x=${f} y=${fy(4)} width="37.500" height="37.500" rx="2.500" fill="#f9dfc2"/>
      <path d="M513.750 ${fy(4)}h18.750v18.750h-18.750zM495 ${fy(4) + 18.75}h18.750v18.750H495z" fill="#bdd9ec"/><circle cx="513.750" cy=${fy(4) + 18.75} r="4" fill="#e6e6e2"/>
      <rect x=${f} y=${fy(5)} width="37.500" height="37.500" rx="2.500" fill="url(#sn)"/>
      ${label(677.5, svg`X${sb("1")}`)}
      ${label(746, svg`X${sb("2")}`)}
      ${label(814.5, svg`X${sb("1")}<tspan dy="-11" font-size="11">2</tspan>`, true)}
      ${label(883.5, svg`X${sb("2")}<tspan dy="-11" font-size="11">2</tspan>`, true)}
      ${label(952.5, svg`X${sb("1")}<tspan dy="-5.500">X</tspan>${sb("2")}`, true)}
      ${label(1021, svg`sin(X${sb("1")}<tspan dy="-5.500">)</tspan>`, true)}
      ${L1.map((h, i) => neuron(a, ROWS[i], h))}
      ${L2.map((h, i) => neuron(b, ROWS[i], h))}
      ${[1, -1, 1, 1, 1].map((w, i) => biasDot(726, ROWS[i], w))}
      ${[-1, -0.6, 1, 0.3, 0.3].map((w, i) => biasDot(1170.2, ROWS[i], w))}`;
  }

  private renderPlot() {
    const ticks = [-6, -5, -4, -3, -2, -1, 0, 1, 2, 3, 4, 5, 6];
    const s = 325 / 12;
    return html`<svg width="360" height="356" viewBox="0 0 360 356" overflow="visible">
      <defs><filter id="bl" x="-5%" y="-5%" width="110%" height="110%"><feGaussianBlur stdDeviation="5"/></filter></defs>
      <svg width="325" height="325" viewBox="74 404 864 943" preserveAspectRatio="none">
        <rect x="74" y="404" width="864" height="943" fill=${HEAT_ORANGE}/>
        <path d="M760 660L938 550V980H800z" fill="#f4be82" opacity=".7"/>
        <g filter="url(#bl)" stroke="#f0ece6" stroke-width="7" stroke-linejoin="round">
          <path d="M20 858Q170 870 240 850C300 830 340 770 365 735C390 695 400 640 430 633C455 626 450 642 485 640C510 635 540 600 570 582C600 560 630 570 645 590C660 615 665 628 690 635C725 645 735 655 745 690C758 750 762 800 775 860C785 910 795 935 830 945Q880 955 990 972V1400H20z" fill=${HEAT_BLUE}/>
          <path d="M75 1003C150 975 220 925 270 908Q310 893 336 893C320 930 320 965 332 1000C345 1030 380 1030 420 1040L545 1062L550 1014C575 1032 598 1024 597 1000C592 960 590 920 572 885C555 850 540 800 518 782C505 770 488 775 490 800Q496 850 508 911C460 905 410 896 373 888C370 860 375 845 400 826C440 795 490 760 520 742C560 722 610 690 640 685C665 683 670 710 678 745C690 800 695 870 706 915Q715 940 738 946Q700 960 692 975C690 1020 700 1060 680 1090C655 1120 610 1117 572 1106L560 1135Q470 1125 380 1105C330 1095 300 1060 280 1037C250 1010 150 1006 75 1003z" fill=${HEAT_ORANGE}/>
        </g>
        <g filter="url(#bl)"><path d="M320 1105L560 1143L568 1165L340 1150z" fill="#cfe0ea" opacity=".55"/><path d="M775 690Q775 800 805 925L770 860L750 700z" fill="#e8eaeb" opacity=".6"/></g>
        <path d="M302 1140L560 1150L585 1200L604 1347H264L298 1220z" fill="#7db3d9" opacity=".5"/>
        <path d="M795 985Q860 960 938 985V1110Q830 1080 795 985z" fill="#7db3d9" opacity=".5"/><path d="M850 990Q900 980 938 995V1080Q870 1060 850 990z" fill="#8dbbdc" opacity=".4"/>
      </svg>
      ${parse(ORANGE_PTS).map(dot(ORANGE))}${parse(BLUE_PTS).map(dot(BLUE))}
      <g font-size="13.500" font-family="Liberation Sans, Arial, sans-serif">
        ${ticks.map((t) => svg`
          <path d="M${(t + 6) * s} 325v7" stroke=${t ? "#d5d5d5" : "#777"} stroke-width="1.250"/>
          <path d="M325 ${(6 - t) * s}h7" stroke=${t ? "#d5d5d5" : "#777"} stroke-width="1.250"/>
          <text x=${(t + 6) * s} y="345" text-anchor="middle" fill=${t ? "#b8b8b8" : "#333"}>${t}</text>
          <text x="336" y=${(6 - t) * s + 4} fill=${t ? "#b8b8b8" : "#333"}>${t}</text>`)}
      </g>
    </svg>`;
  }

  private renderLoss() {
    return html`<svg class="loss" width="171.500" height="65" viewBox="535 157 456 188" preserveAspectRatio="none" overflow="visible">
      <path d="M539 160V191H585L610 198L640 213L660 228L690 234L700 240L703 232L708 246L715 238V262L719 245L724 275V240L730 290L734 250L738 285L743 255L747 295L752 255L756 285L760 262L762 298L766 265L768 305L772 315L800 318L826 324L832 336L848 340L850 332L880 337L885 341H991" fill="none" stroke="#777" stroke-width="4"/>
      <path d="M538 157V184H615L625 181L632 190L642 186L646 196L652 200L656 193L680 191L694 186L700 195L706 186L712 205L716 188L720 215L724 188L728 228L731 190L733 250L737 192L742 245L746 195L749 235L752 180L755 240L760 205L763 250L767 225L770 265L778 271L800 276L815 290L828 312L845 320L879 318L883 327H991" fill="none" stroke="#000" stroke-width="4"/>
    </svg>`;
  }

  render() {
    return html`<div class="screen">
      <div class="tabs seg">
        ${TABS.map((t) => html`<div class="tab ${t.active ? "active" : ""}"><span class="fav">${this.ic(t.icon)}</span><span class="title"><fit-text w=${t.w}>${t.title}</fit-text></span><span class="tabx">${this.ic("x")}</span></div>`)}
        <span class="newtab">${this.ic("plus")}</span>
        <div class="wins">${["chev", "min", "restore", "close"].map((n) => html`<span>${this.ic(n)}</span>`)}</div>
      </div>
      <div class="bar seg">
        <div class="nav">${this.ic("back")}${this.ic("fwd")}${this.ic("reload")}</div>
        <div class="omni"><span class="lock">${this.ic("lock")}</span><fit-text class="host" w="217">playground.tensorflow.org</fit-text><fit-text w="1060">/#activation=tanh&amp;batchSize=30&amp;dataset=spiral&amp;regDataset=reg-plane&amp;learningRate=0.01&amp;regularizationRate=0.001&amp;nois...</fit-text>
          <span class="end">${["translate", "share", "star"].map((n) => html`<span class="cell">${this.ic(n)}</span>`)}</span></div>
        <div class="exts">${["eext", "doc", "wand", "newf", "puzzle", "panel", "avatar", "dots"].map((n) => html`<span class="cell">${this.ic(n)}</span>`)}</div>
      </div>
      <div class="marks seg">
        ${BOOKMARKS.map(([i, t, w, cw]) => html`<div class="mark ${i}" style="width:${cw}px"><span class="mico">${this.ic(i)}</span><fit-text w=${w}>${t}</fit-text></div>`)}
        <span class="more">»</span>
      </div>
      <div class="view">
        <div class="page">
          <div class="hero">
            <fit-text w="893">Tinker With a <strong>Neural Network</strong> Right Here in Your Browser.</fit-text>
            <fit-text w="682.500">Don’t Worry, You Can’t Break It. We Promise.</fit-text>
            <svg class="corner" width="45" height="46" viewBox="0 0 45 46"><path d="M0 0h45v46z" fill="#476372"/><path d="M9 0h4l4 6 3 0V0h8v8q8-2 9-8z" fill="#c3ced3"/></svg>
          </div>
          <div class="ctl">
            <div class="player">
              <svg width="21" height="24" viewBox="0 0 21 24"><path d="M1.500 14a9 9 0 1 0 9-9" fill="none" stroke="#222" stroke-width="2.300"/><path d="M11 0v10L4.500 5z" fill="#222"/></svg>
              <span class="play"><svg width="24" height="27" viewBox="-3 0 24 27"><path d="M0 0l21 13.500L0 27z" fill="#fff"/></svg></span>
              <svg width="16" height="16" viewBox="0 0 16 16"><path d="M0 0l10.500 8L0 16zM13 0h2.500v16H13z" fill="#111"/></svg>
            </div>
            <div class="field epoch"><div class="lab">Epoch</div><div class="epochn">000,505</div></div>
            ${CONTROLS.map(([l, v, w, pitch, lw]) => html`<div class="field" style="width:${pitch}px"><div class="lab"><fit-text w=${lw}>${l}</fit-text></div><div class="sel" style="width:${w}px">${v}<svg width="9" height="20" viewBox="0 0 9 20"><path d="M0 7.500h9l-4.500 5.500z" fill="#999"/></svg></div></div>`)}
          </div>
          <div class="main">
            <div class="data">
              <h3><fit-text w="48.500">DATA</fit-text></h3>
              <div class="sub">Which dataset do<br>you want to use?</div>
              <div class="thumbs">${["circle", "xor", "gauss", "spiral"].map(thumb)}</div>
              <div class="slab" style="margin-top:24.500px">Ratio of training to
test data:  50%</div>
              <div style="margin-top:5px">${this.slider(0.5)}</div>
              <div class="slab" style="margin-top:29px">Noise:  0</div>
              <div style="margin-top:4.500px">${this.slider(0)}</div>
              <div class="slab" style="margin-top:29px">Batch size:  30</div>
              <div style="margin-top:4.500px">${this.slider(1)}</div>
              <div class="regen"><fit-text w="90.500">REGENERATE</fit-text></div>
            </div>
            <div class="net">
              <div class="nethead">
                <div class="feat"><h3><fit-text w="94">FEATURES</fit-text></h3><div class="sub">Which properties do<br>you want to feed in?</div></div>
                <div class="layers">
                  <div class="lrow">${round("bar")}${round("minus")}<h3>2</h3><h3><fit-text w="145.500">HIDDEN LAYERS</fit-text></h3></div>
                  <div class="brace"></div>
                  <div class="groups">${[0, 1].map(() => html`<div class="group"><div class="pair">${round("plus")}${round("minus")}</div><div class="n"><fit-text w="66">8 neurons</fit-text></div></div>`)}</div>
                </div>
              </div>
              <svg class="canvas" width="939.500" height="384" viewBox="428.500 646.500 939.500 384">${this.renderNetwork()}</svg>
            </div>
            <div class="out">
              <h3><fit-text w="75">OUTPUT</fit-text></h3>
              <div class="losses"><div class="ltext"><div class="test">Test loss 0.057</div><div>Training loss 0.022</div></div>${this.renderLoss()}</div>
              <div class="plotrow">${this.renderPlot()}</div>
            </div>
          </div>
        </div>
        <div class="scroll">
          <svg width="9" height="6" viewBox="0 0 9 6"><path d="M4.500 0L9 6H0z" fill="#505050"/></svg>
          <div class="thumbbar"></div>
          <svg width="9" height="6" viewBox="0 0 9 6"><path d="M0 0h9L4.500 6z" fill="#505050"/></svg>
        </div>
      </div>
      <div class="task seg">
        <span class="t">${this.ic("win")}</span>
        <div class="find">${this.ic("search")}<span class="q"><fit-text w="208">在這裡輸入文字來搜尋</fit-text></span>${this.ic("tree")}</div>
        <span class="t">${this.ic("cortana")}</span><span class="t">${this.ic("taskview")}</span><span class="t">${this.ic("sep")}</span><span></span>
        <span class="t">${this.ic("diamond")}</span><span class="t">${this.ic("flower")}</span><span class="t run">${this.ic("jup2")}</span><span class="t">${this.ic("github")}</span><span class="t run">${this.ic("files")}</span><span class="t on">${this.ic("chrome")}</span><span class="t run">${this.ic("paint")}</span>
        <span></span><span class="t">${this.ic("sep")}</span><span class="t">${this.ic("trend")}</span><span class="t"><span class="batt"><fit-text w="35">98%</fit-text></span></span><span class="t">${this.ic("plug")}</span><span></span>
        <span class="t">${this.ic("rain")}</span><span class="t temp"><fit-text w="40">29°C</fit-text></span><span class="t temp">雨</span><span class="t">${this.ic("up")}</span><span class="t">${this.ic("cam")}</span><span class="t">${this.ic("wifi")}</span><span class="t">${this.ic("vol")}</span><span class="t ime">英</span>
        <span class="t clock"><fit-text w="73">下午 05:52</fit-text><fit-text w="74">2022/7/30</fit-text></span><span class="t last">${this.ic("note")}</span>
      </div>
    </div>`;
  }
}
